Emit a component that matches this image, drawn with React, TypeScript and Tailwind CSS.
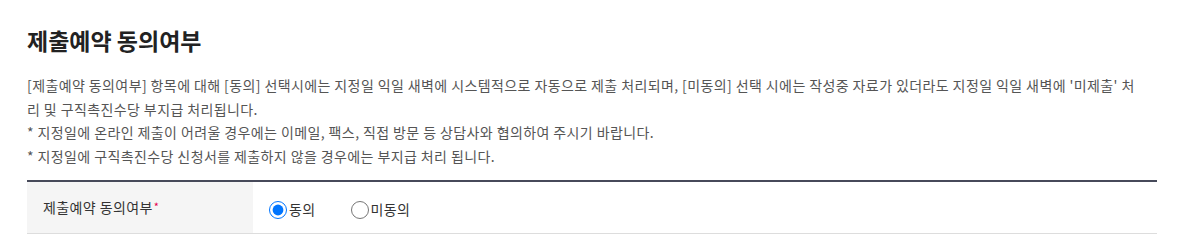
export default function App() {
  const font = { fontFamily: '"Noto Sans CJK KR", "Noto Sans", sans-serif' };

  return (
    <div className="w-[1177px] h-[248px] bg-white overflow-hidden" style={font}>
      <div className="pl-[27px] pr-[20px] pt-[23px]">
        {/* Title */}
        <h2 className="text-[23px] leading-[34px] font-bold text-[#222]">
          제출예약 동의여부
        </h2>

        {/* Description */}
        <div className="mt-[17px] pr-[12px] text-[14px] leading-[23.5px] text-[#555] tracking-[0.4px]">
          <p>
            [제출예약 동의여부] 항목에 대해 [동의] 선택시에는 지정일 익일 새벽에 시스템적으로 자동으로 제출 처리되며, [미동의] 선택 시에는 작성중 자료가 있더라도 지정일 익일 새벽에 '미제출' 처리 및 구직촉진수당 부지급 처리됩니다.
          </p>
          <p>* 지정일에 온라인 제출이 어려울 경우에는 이메일, 팩스, 직접 방문 등 상담사와 협의하여 주시기 바랍니다.</p>
          <p>* 지정일에 구직촉진수당 신청서를 제출하지 않을 경우에는 부지급 처리 됩니다.</p>
        </div>

        {/* Form table */}
        <div className="mt-[12px] border-t-2 border-[#474a5a]">
          <div className="flex border-b border-[#dddddd] h-[52px]">
            <div className="w-[226px] bg-[#f5f5f5] flex items-center pl-[16px] text-[14px] text-[#333] tracking-[0.4px]">
              제출예약 동의여부<span className="text-[#e5004f] text-[11px] self-start mt-[16px] ml-[1px]">*</span>
            </div>
            <div className="flex-1 flex items-center pl-[16px] pt-[4px] gap-[35px] text-[14px] text-[#333] tracking-[0.4px]">
              <label className="flex items-center gap-[2px]">
                <input type="radio" name="agree" defaultChecked className="w-[18px] h-[18px] m-0 accent-[#0075ff]" />
                <span>동의</span>
              </label>
              <label className="flex items-center gap-[2px]">
                <input type="radio" name="agree" className="w-[18px] h-[18px] m-0 accent-[#0075ff]" />
                <span>미동의</span>
              </label>
            </div>
          </div>
        </div>
      </div>
    </div>
  );
}
